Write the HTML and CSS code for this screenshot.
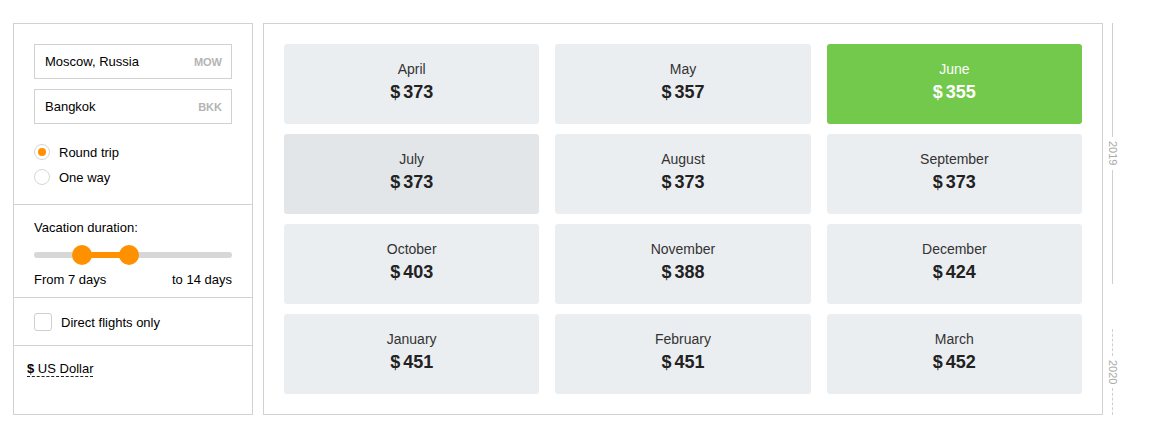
FILE: index.html
```html
<!DOCTYPE html>
<html>
<head>
<meta charset="utf-8">
<link rel="stylesheet" href="styles.css">
</head>
<body>
<div class="page">
  <aside class="filters">
    <section class="sec sec-route">
      <div class="field"><span class="city"><b class="city-name">Moscow</b>, Russia</span><span class="iata">MOW</span></div>
      <div class="field field-2"><span class="city">Bangkok</span><span class="iata">BKK</span></div>
      <div class="radios">
        <label class="radio"><span class="dot on"></span>Round trip</label>
        <label class="radio"><span class="dot"></span>One way</label>
      </div>
    </section>
    <section class="sec sec-duration">
      <div class="label">Vacation duration:</div>
      <div class="slider">
        <div class="track"></div>
        <div class="fill" style="left:48px;width:47px"></div>
        <div class="thumb" style="left:48px"></div>
        <div class="thumb" style="left:95px"></div>
      </div>
      <div class="range"><span>From 7 days</span><span>to 14 days</span></div>
    </section>
    <section class="sec sec-direct">
      <label class="check"><span class="box"></span>Direct flights only</label>
    </section>
    <section class="sec sec-currency">
      <span class="currency"><b>$</b> US Dollar</span>
    </section>
  </aside>
  <main class="months">
    <div class="grid">
      <div class="card"><div class="m">April</div><div class="p">$&#8198;373</div></div>
      <div class="card"><div class="m">May</div><div class="p">$&#8198;357</div></div>
      <div class="card best"><div class="m">June</div><div class="p">$&#8198;355</div></div>
      <div class="card hover"><div class="m">July</div><div class="p">$&#8198;373</div></div>
      <div class="card"><div class="m">August</div><div class="p">$&#8198;373</div></div>
      <div class="card"><div class="m">September</div><div class="p">$&#8198;373</div></div>
      <div class="card"><div class="m">October</div><div class="p">$&#8198;403</div></div>
      <div class="card"><div class="m">November</div><div class="p">$&#8198;388</div></div>
      <div class="card"><div class="m">December</div><div class="p">$&#8198;424</div></div>
      <div class="card"><div class="m">January</div><div class="p">$&#8198;451</div></div>
      <div class="card"><div class="m">February</div><div class="p">$&#8198;451</div></div>
      <div class="card"><div class="m">March</div><div class="p">$&#8198;452</div></div>
    </div>
  </main>
  <div class="years">
    <div class="year y2019"><span class="line"></span><span class="yt">2019</span><span class="line"></span></div>
    <div class="year y2020"><span class="line dash"></span><span class="yt">2020</span><span class="line dash"></span></div>
  </div>
</div>
</body>
</html>
```

FILE: styles.css
```css
* { box-sizing: border-box; }
html, body { margin: 0; padding: 0; background: #fff; }
body { font-family: "Liberation Sans", Arial, sans-serif; font-size: 13px; color: #000; }

.page { display: flex; align-items: flex-start; padding: 23px 0 0 13px; }

.filters { width: 240px; height: 392px; border: 1px solid #d2d2d2; display: flex; flex-direction: column; }
.sec { border-bottom: 1px solid #d2d2d2; padding-left: 20px; padding-right: 20px; }
.sec-currency { border-bottom: none; flex: 1; padding: 15px 0 0 13px; }

.sec-route { padding-top: 20px; padding-bottom: 16px; height: 181px; }
.field { height: 35px; border: 1px solid #d2d2d2; display: flex; align-items: center; justify-content: space-between; padding: 0 9px 0 10px; line-height: 16px; }
.field-2 { margin-top: 10px; }
.city-name { font-weight: normal; }
.iata { font-size: 11px; font-weight: bold; color: #b4b4b4; }

.radios { margin-top: 18px; display: flex; flex-direction: column; gap: 5px; }
.radio { display: flex; align-items: center; height: 20px; gap: 9px; }
.dot { width: 16px; height: 16px; border-radius: 50%; border: 1px solid #d6d6d6; display: flex; align-items: center; justify-content: center; }
.dot.on::after { content: ""; width: 8px; height: 8px; border-radius: 50%; background: #ff9000; }

.sec-duration { padding-top: 15px; height: 93px; }
.label { line-height: 16px; }
.slider { position: relative; height: 20px; margin-top: 9px; }
.track { position: absolute; left: 0; right: 0; top: 7px; height: 6px; border-radius: 3px; background: #d7d7d7; }
.fill { position: absolute; top: 7px; height: 6px; background: #ff9000; }
.thumb { position: absolute; top: 0; width: 20px; height: 20px; margin-left: -10px; border-radius: 50%; background: #ff9000; }
.range { display: flex; justify-content: space-between; margin-top: 7px; line-height: 16px; }

.sec-direct { height: 48px; display: flex; align-items: center; padding-top: 1px; }
.check { display: flex; align-items: center; gap: 9px; }
.box { width: 18px; height: 18px; border: 1px solid #cfcfcf; border-radius: 3px; }

.currency { line-height: 16px; border-bottom: 1px dashed #222; padding-bottom: 0; }
.currency b { font-weight: bold; }

.months { width: 840px; height: 392px; border: 1px solid #d2d2d2; margin-left: 10px; padding: 20px; }
.grid { display: grid; grid-template-columns: repeat(3, 1fr); grid-auto-rows: 80px; column-gap: 16px; row-gap: 10px; }
.card { background: #ebeef1; border-radius: 3px; display: flex; flex-direction: column; align-items: center; padding-top: 17px; color: #333; }
.card.hover { background: #e3e6e9; }
.card.best { background: #72c94b; color: #fff; }
.m { font-size: 14px; line-height: 16px; }
.p { font-size: 18px; font-weight: bold; line-height: 22px; margin-top: 4px; color: #222; }
.card.best .p { color: #fff; }

.years { width: 17px; margin-left: 1px; height: 392px; display: flex; flex-direction: column; }
.year { display: flex; flex-direction: column; align-items: center; }
.y2019 { height: 261px; }
.y2020 { height: 86px; margin-top: 45px; }
.line { flex: 1; width: 0; border-left: 1px solid #cfcfcf; }
.line.dash { border-left: 1px dashed #cfcfcf; }
.yt { writing-mode: vertical-rl; font-size: 11px; color: #aaa; padding: 4px 0; line-height: 12px; }
```
